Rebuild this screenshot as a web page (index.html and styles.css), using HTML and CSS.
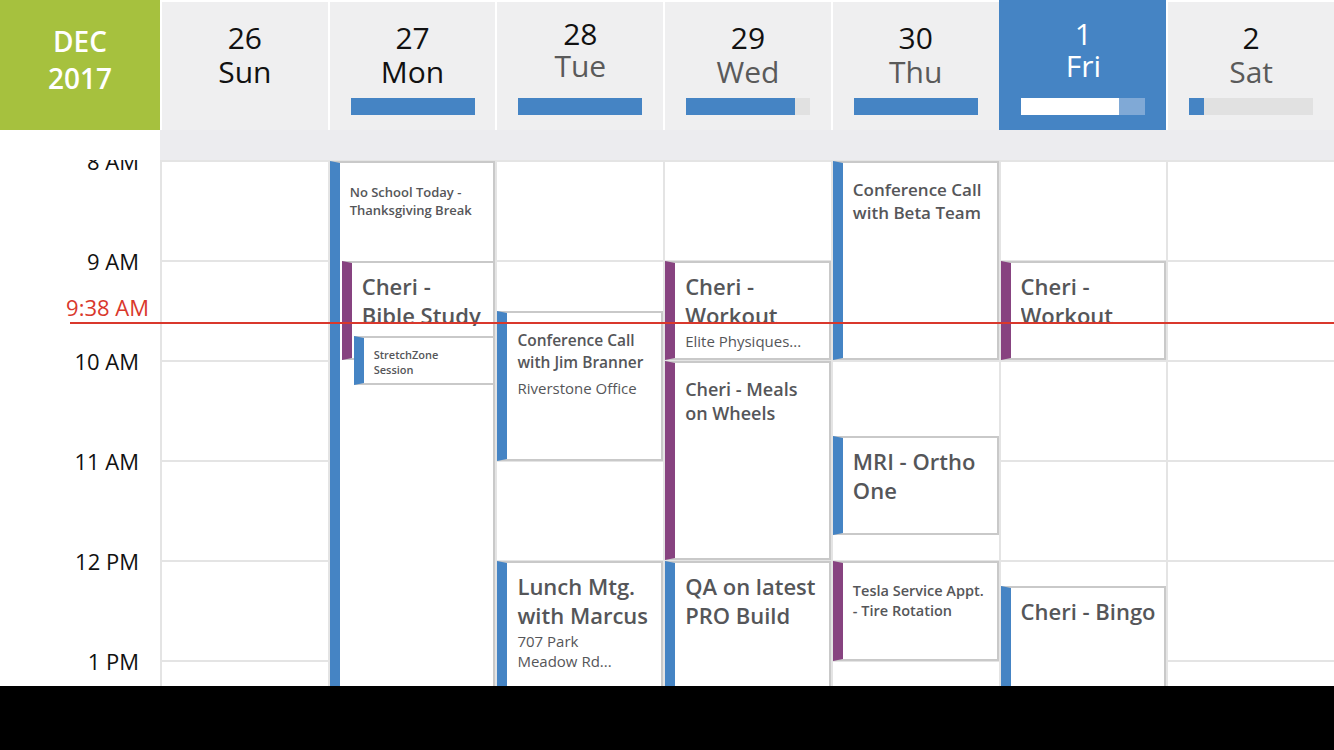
FILE: index.html
```html
<!DOCTYPE html>
<html lang="en">
<head>
  <meta charset="UTF-8" />
  <meta name="viewport" content="width=device-width, initial-scale=1.0"/>
  <title>Week Calendar</title>
  <link rel="stylesheet" href="styles.css">
</head>
<body>
<div class="app">

  <header class="week-head">
    <div class="month"><span>DEC</span><span>2017</span></div>
    <div class="day"><div class="num">26</div><div class="name">Sun</div></div>
    <div class="day"><div class="num">27</div><div class="name">Mon</div>
      <div class="bar"><div class="fill" style="width:100%"></div></div></div>
    <div class="day up future"><div class="num">28</div><div class="name">Tue</div>
      <div class="bar"><div class="fill" style="width:100%"></div></div></div>
    <div class="day future"><div class="num">29</div><div class="name">Wed</div>
      <div class="bar"><div class="fill" style="width:88%"></div></div></div>
    <div class="day future"><div class="num">30</div><div class="name">Thu</div>
      <div class="bar"><div class="fill" style="width:100%"></div></div></div>
    <div class="day up today"><div class="num">1</div><div class="name">Fri</div>
      <div class="bar"><div class="fill" style="width:79%"></div></div></div>
    <div class="day future"><div class="num">2</div><div class="name">Sat</div>
      <div class="bar"><div class="fill" style="width:12%"></div></div></div>
  </header>

  <div class="strip"><div></div><div class="strip-fill"></div></div>

  <main class="grid">
    <div class="times">
      <div class="slot"><span>8 AM</span></div>
      <div class="slot"><span>9 AM</span></div>
      <div class="slot"><span>10 AM</span></div>
      <div class="slot"><span>11 AM</span></div>
      <div class="slot"><span>12 PM</span></div>
      <div class="slot"><span>1 PM</span></div>
    </div>

    <!-- Sun -->
    <div class="col">
      <div class="hour"></div><div class="hour"></div><div class="hour"></div>
      <div class="hour"></div><div class="hour"></div><div class="hour"></div>
    </div>

    <!-- Mon -->
    <div class="col">
      <div class="hour"></div><div class="hour"></div><div class="hour"></div>
      <div class="hour"></div><div class="hour"></div><div class="hour"></div>
      <div class="ev" style="top:1px;height:599px">
        <div class="title t13">No School Today - Thanksgiving Break</div>
      </div>
      <div class="ev purple in1" style="top:101px;height:99px">
        <div class="title t22">Cheri - Bible Study</div>
      </div>
      <div class="ev in2" style="top:176px;height:49px">
        <div class="title t11">StretchZone Session</div>
      </div>
    </div>

    <!-- Tue -->
    <div class="col">
      <div class="hour"></div><div class="hour"></div><div class="hour"></div>
      <div class="hour"></div><div class="hour"></div><div class="hour"></div>
      <div class="ev" style="top:151px;height:150px">
        <div class="title t15">Conference Call with Jim Branner</div>
        <div class="sub">Riverstone Office</div>
      </div>
      <div class="ev" style="top:401px;height:150px">
        <div class="title t22">Lunch Mtg. with Marcus</div>
        <div class="sub">707 Park<br>Meadow Rd...</div>
      </div>
    </div>

    <!-- Wed -->
    <div class="col">
      <div class="hour"></div><div class="hour"></div><div class="hour"></div>
      <div class="hour"></div><div class="hour"></div><div class="hour"></div>
      <div class="ev purple" style="top:101px;height:99px">
        <div class="title t22">Cheri - Workout</div>
        <div class="sub">Elite Physiques...</div>
      </div>
      <div class="ev purple" style="top:201px;height:199px">
        <div class="title t18">Cheri - Meals on Wheels</div>
      </div>
      <div class="ev" style="top:401px;height:150px">
        <div class="title t22">QA on latest PRO Build</div>
      </div>
    </div>

    <!-- Thu -->
    <div class="col">
      <div class="hour"></div><div class="hour"></div><div class="hour"></div>
      <div class="hour"></div><div class="hour"></div><div class="hour"></div>
      <div class="ev" style="top:1px;height:199px">
        <div class="title t17">Conference Call with Beta Team</div>
      </div>
      <div class="ev" style="top:276px;height:99px">
        <div class="title t22">MRI - Ortho One</div>
      </div>
      <div class="ev purple" style="top:401px;height:100px">
        <div class="title t14">Tesla Service Appt. - Tire Rotation</div>
      </div>
    </div>

    <!-- Fri -->
    <div class="col">
      <div class="hour"></div><div class="hour"></div><div class="hour"></div>
      <div class="hour"></div><div class="hour"></div><div class="hour"></div>
      <div class="ev purple" style="top:101px;height:99px">
        <div class="title t22">Cheri - Workout</div>
      </div>
      <div class="ev" style="top:426px;height:150px">
        <div class="title t22">Cheri - Bingo</div>
      </div>
    </div>

    <!-- Sat -->
    <div class="col">
      <div class="hour"></div><div class="hour"></div><div class="hour"></div>
      <div class="hour"></div><div class="hour"></div><div class="hour"></div>
    </div>

    <div class="now" style="top:162px">
      <span class="now-label">9:38 AM</span>
    </div>
  </main>

  <footer class="bottom"></footer>
</div>
</body>
</html>
```

FILE: styles.css
```css
* {
  box-sizing: border-box;
}
body {
  margin: 0;
  font-family: 'Open Sans', 'Noto Sans', sans-serif;
  background: #fff;
  color: #111;
}
.app {
  width: 1334px;
  height: 750px;
  display: flex;
  flex-direction: column;
  overflow: hidden;
}

/* week header */
.week-head {
  height: 130px;
  display: grid;
  grid-template-columns: 160px repeat(7, 1fr);
  background: #fff;
}
.month {
  background: #a6c13e;
  color: #fff;
  font-size: 28px;
  font-weight: 600;
  line-height: 37px;
  padding-top: 23px;
  display: flex;
  flex-direction: column;
  align-items: center;
}
.day {
  margin-top: 2px;
  background: #efeff0;
  border-left: 2px solid #fff;
  display: flex;
  flex-direction: column;
  align-items: center;
  padding: 19px 0 15px;
  font-size: 30px;
  line-height: 34px;
}
.day .num {
  color: #111;
}
.day .name {
  color: #111;
}
.day.future .name {
  color: #5a5a5a;
}
.day.up {
  padding-top: 16px;
  line-height: 32px;
}
.day.today {
  margin-top: 0;
  padding-top: 18px;
  background: #4584c4;
  border-left-color: #4584c4;
}
.day.today .num,
.day.today .name {
  color: #fff;
}
.bar {
  margin-top: auto;
  width: 124px;
  height: 17px;
  background: #e1e1e1;
}
.bar .fill {
  height: 100%;
  background: #4584c4;
}
.day.today .bar {
  background: #80a9d6;
}
.day.today .bar .fill {
  background: #fff;
}

.strip {
  height: 30px;
  display: grid;
  grid-template-columns: 160px 1fr;
}
.strip-fill {
  background: #ececef;
}

/* time grid */
.grid {
  position: relative;
  height: 526px;
  display: grid;
  grid-template-columns: 160px repeat(7, 1fr);
  align-items: start;
  overflow: hidden;
}
.times {
  padding-right: 21px;
}
.slot {
  height: 100px;
  text-align: right;
  font-size: 22px;
  line-height: 28px;
  color: #111;
}
.slot span {
  display: block;
  transform: translateY(-13px);
}
.col {
  position: relative;
  border-left: 2px solid #e4e4e4;
}
.hour {
  height: 100px;
  border-top: 2px solid #e4e4e4;
}

/* events */
.ev {
  position: absolute;
  left: 0;
  right: 0;
  background: #fff;
  border: 2px solid #c9c9c9;
  border-left: 10px solid #4584c4;
  padding: 9px 6px 0 10px;
  overflow: hidden;
  color: #555659;
}
.ev.purple {
  border-left-color: #874380;
}
.ev.in1 {
  left: 12px;
}
.ev.in2 {
  left: 24px;
}
.title {
  font-weight: 600;
}
.t22 {
  font-size: 22px;
  line-height: 29px;
  max-height: 54px;
  overflow: hidden;
}
.t18 {
  font-size: 18px;
  line-height: 24px;
  margin-top: 5px;
}
.t17 {
  font-size: 17px;
  line-height: 23px;
  margin-top: 6px;
}
.t15 {
  font-size: 15.5px;
  line-height: 22px;
  margin-top: 7px;
}
.t14 {
  font-size: 14.5px;
  line-height: 20px;
  margin-top: 9px;
}
.t13 {
  font-size: 13px;
  line-height: 18px;
  margin-top: 11px;
}
.t11 {
  max-width: 80px;
  font-size: 11px;
  line-height: 15px;
}
.sub {
  margin-top: 5px;
  font-size: 15px;
  line-height: 20px;
}

/* current time marker */
.now {
  position: absolute;
  left: 70px;
  right: 0;
  height: 2px;
  background: #d9382c;
}
.now-label {
  position: absolute;
  right: 1185px;
  bottom: 3px;
  color: #d9382c;
  font-size: 22px;
  line-height: 28px;
  white-space: nowrap;
}

.bottom {
  flex: 1;
  background: #000;
}
```
